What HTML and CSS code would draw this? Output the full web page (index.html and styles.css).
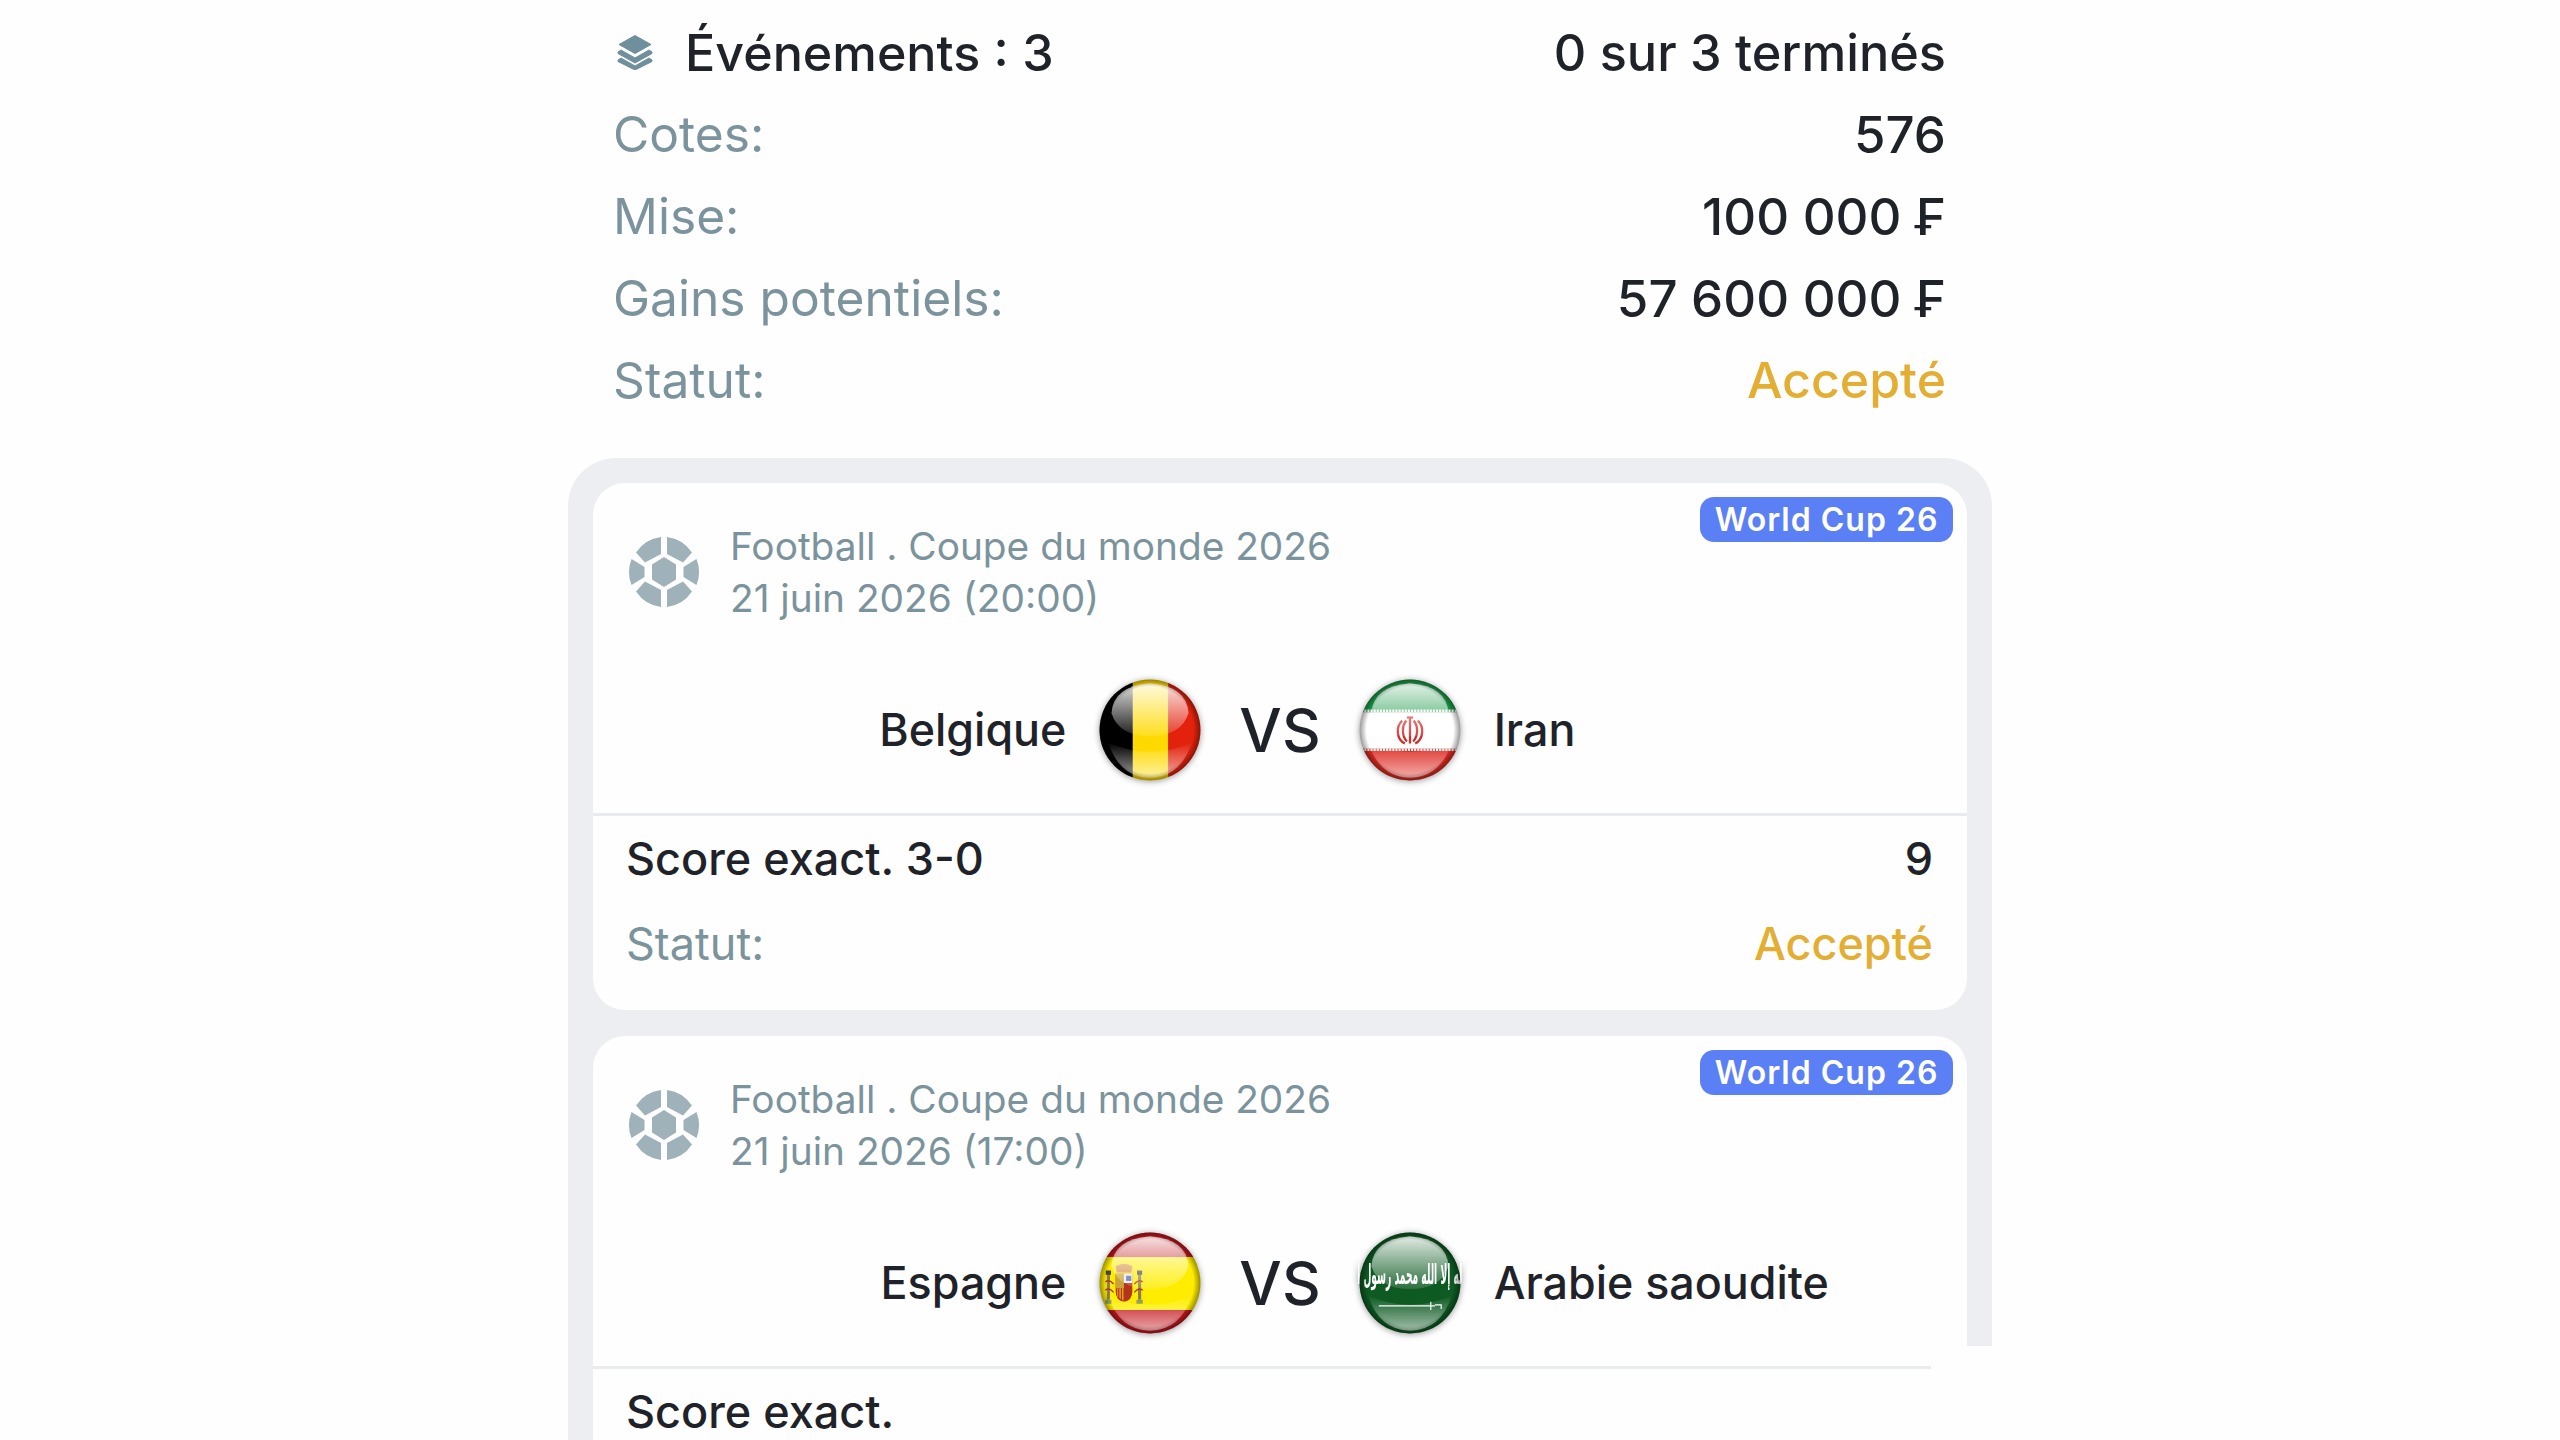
FILE: index.html
```html
<!DOCTYPE html>
<html lang="fr">
<head>
<meta charset="utf-8">
<title>Coupon</title>
<link rel="stylesheet" href="styles.css">
</head>
<body>
<svg class="defs" aria-hidden="true">
  <defs>
    <clipPath id="disc"><circle cx="50" cy="50" r="48.5"/></clipPath>
    <linearGradient id="glossTop" x1="0" y1="0" x2="0" y2="1">
      <stop offset="0" stop-color="#fff" stop-opacity=".88"/>
      <stop offset="1" stop-color="#fff" stop-opacity=".12"/>
    </linearGradient>
    <linearGradient id="glossBot" x1="0" y1="0" x2="0" y2="1">
      <stop offset="0" stop-color="#fff" stop-opacity="0"/>
      <stop offset="1" stop-color="#fff" stop-opacity=".62"/>
    </linearGradient>
    <radialGradient id="rim" cx=".5" cy=".5" r=".5">
      <stop offset=".86" stop-color="#000" stop-opacity="0"/>
      <stop offset="1" stop-color="#000" stop-opacity=".4"/>
    </radialGradient>
    <filter id="softer"><feGaussianBlur stdDeviation=".3"/></filter>
    <symbol id="gloss" viewBox="0 0 100 100">
      <path d="M13 34 Q14 8 50 5 Q86 8 87 34 Q80 56 50 56 Q20 56 13 34Z" fill="url(#glossTop)"/>
      <path d="M10 62 Q50 80 90 62 Q80 95 50 96 Q20 95 10 62Z" fill="url(#glossBot)"/>
      <circle cx="50" cy="50" r="48.5" fill="url(#rim)"/>
    </symbol>
    <symbol id="ball" viewBox="0 0 72 72">
      <path d="M36 21 48 28.5V43.5L36 51 24 43.5V28.5Z"/>
      <path d="M33 1V18L17 26.5 8 16.5A35.5 35.5 0 0 1 33 1Z"/>
      <path d="M39 1V18L55 26.5 64 16.5A35.5 35.5 0 0 0 39 1Z"/>
      <path d="M3.5 23 16.5 31V41L3.5 49A35.5 35.5 0 0 1 3.5 23Z"/>
      <path d="M68.5 23 55.5 31V41L68.5 49A35.5 35.5 0 0 0 68.5 23Z"/>
      <path d="M33 71V54L17 45.5 8 55.5A35.5 35.5 0 0 0 33 71Z"/>
      <path d="M39 71V54L55 45.5 64 55.5A35.5 35.5 0 0 1 39 71Z"/>
    </symbol>
  </defs>
</svg>

<main class="page">
  <section class="summary">
    <div class="row">
      <div class="events">
        <svg class="layers" viewBox="0 0 36 36">
          <path d="M18 1.5 34 10.5 18 19.5 2 10.5Z"/>
          <path d="M4 16 18 24 32 16 35 18V19.5L18 29 1 19.5V18Z"/>
          <path d="M4 24 18 32 32 24 35 26V27.5L18 36 1 27.5V26Z"/>
        </svg>
        <span class="value">Événements : 3</span>
      </div>
      <span class="value terminated">0 sur 3 terminés</span>
    </div>
    <div class="row"><span class="label">Cotes:</span><span class="value num">576</span></div>
    <div class="row"><span class="label">Mise:</span><span class="value num">100 000 ₣</span></div>
    <div class="row"><span class="label">Gains potentiels:</span><span class="value num">57 600 000 ₣</span></div>
    <div class="row"><span class="label">Statut:</span><span class="accepted">Accepté</span></div>
  </section>

  <section class="panel">
    <article class="card">
      <span class="badge">World Cup 26</span>
      <header class="meta">
        <svg class="ball"><use href="#ball"/></svg>
        <div class="meta-text">
          <div>Football . Coupe du monde 2026</div>
          <div>21 juin 2026 (20:00)</div>
        </div>
      </header>
      <div class="match">
        <div class="side side-left">
          <span class="team">Belgique</span>
          <svg class="flag" viewBox="0 0 100 100">
            <g clip-path="url(#disc)"><g filter="url(#softer)">
              <rect x="0" y="0" width="33.5" height="100" fill="#050505"/>
              <rect x="33.5" y="0" width="34" height="100" fill="#ffd900"/>
              <rect x="67.5" y="0" width="32.5" height="100" fill="#e2200c"/>
            </g></g>
            <use href="#gloss" width="100" height="100"/>
          </svg>
        </div>
        <span class="vs">VS</span>
        <div class="side">
          <svg class="flag" viewBox="0 0 100 100">
            <g clip-path="url(#disc)"><g filter="url(#softer)">
              <rect width="100" height="33" fill="#1f9a49"/>
              <rect y="33" width="100" height="35" fill="#fff"/>
              <rect y="68" width="100" height="32" fill="#de2b20"/>
              <path d="M0 31.5H100M0 69H100" stroke="#fff" stroke-width="2.4" stroke-dasharray="2 1"/>
              <g fill="none" stroke="#d42a2a" stroke-width="2.2">
                <path d="M50 38V63"/>
                <path d="M46.5 41C42 46 42 56 47 61"/>
                <path d="M53.5 41C58 46 58 56 53 61"/>
                <path d="M42.5 41C36 47 37 59 45 63"/>
                <path d="M57.5 41C64 47 63 59 55 63"/>
                <path d="M47 38H53"/>
              </g>
            </g></g>
            <use href="#gloss" width="100" height="100"/>
          </svg>
          <span class="team">Iran</span>
        </div>
      </div>
      <div class="bet">
        <div class="bet-row"><span class="bet-name">Score exact. 3-0</span><span class="bet-name">9</span></div>
        <div class="bet-row"><span class="bet-label">Statut:</span><span class="accepted-small">Accepté</span></div>
      </div>
    </article>

    <article class="card">
      <span class="badge">World Cup 26</span>
      <header class="meta">
        <svg class="ball"><use href="#ball"/></svg>
        <div class="meta-text">
          <div>Football . Coupe du monde 2026</div>
          <div>21 juin 2026 (17:00)</div>
        </div>
      </header>
      <div class="match">
        <div class="side side-left">
          <span class="team">Espagne</span>
          <svg class="flag" viewBox="0 0 100 100">
            <g clip-path="url(#disc)"><g filter="url(#softer)">
              <rect width="100" height="25" fill="#c4121f"/>
              <rect y="25" width="100" height="51" fill="#ffed00"/>
              <rect y="76" width="100" height="24" fill="#c4121f"/>
              <path d="M17 34 Q25 29 33 34 L32 40 H18Z" fill="#d28a3a"/>
              <path d="M17 41H33V58Q33 67 25 68 17 67 17 58Z" fill="#b5351c"/>
              <path d="M17 41H25V55H17Z" fill="#c8a33a"/>
              <path d="M25 41H33V50H25Z" fill="#e8eef0"/>
              <path d="M27 43H32V48H27Z" fill="#5a64a8"/>
              <path d="M18.5 55H24.5V67L18.5 63Z" fill="#d8a521"/>
              <path d="M20 55V65M22.5 55V66" stroke="#c22a1c" stroke-width="1"/>
              <path d="M10 41V66M40 41V66" stroke="#8a7d53" stroke-width="3"/>
              <path d="M7.5 38H12.5V42H7.5ZM37.5 38H42.5V42H37.5Z" fill="#444"/>
              <path d="M7 66H13V70H7ZM37 66H43V70H37Z" fill="#8aa365"/>
              <path d="M7 49Q11 46 15 51M35 51Q39 46 43 49M7 57Q11 54 15 59M35 59Q39 54 43 57" fill="none" stroke="#b5351c" stroke-width="1.4"/>
            </g></g>
            <use href="#gloss" width="100" height="100"/>
          </svg>
        </div>
        <span class="vs">VS</span>
        <div class="side">
          <svg class="flag" viewBox="0 0 100 100">
            <g clip-path="url(#disc)"><g filter="url(#softer)">
              <rect width="100" height="100" fill="#0c5a20"/>
              <path d="M20 72H74" stroke="#fff" stroke-width="1.4"/>
              <path d="M70 68V76M74 71H80V75" fill="none" stroke="#fff" stroke-width="1.1"/>
            </g></g>
            <text class="shahada" transform="translate(50 51) scale(.88 2.6)" text-anchor="middle">لا إله إلا الله محمد رسول الله</text>
            <use href="#gloss" width="100" height="100"/>
          </svg>
          <span class="team">Arabie saoudite</span>
        </div>
      </div>
      <div class="bet">
        <div class="bet-row"><span class="bet-name">Score exact.</span></div>
      </div>
    </article>
  </section>
  <div class="cover"></div>
</main>
</body>
</html>
```
FILE: styles.css
```css
html, body {
  margin: 0;
  height: 1440px;
  overflow: hidden;
  background: #fefefe;
}
body {
  font-family: Inter, "Noto Sans", sans-serif;
  color: #1f2329;
}
.defs {
  display: block;
  width: 0;
  height: 0;
}
.page {
  position: relative;
  display: flex;
  flex-direction: column;
  width: 1424px;
  height: 1440px;
  margin: 0 auto;
  overflow: hidden;
}
.summary {
  flex: none;
  padding: 11px 46px 37px 45px;
}
.row {
  display: flex;
  justify-content: space-between;
  align-items: center;
  height: 82px;
  font-size: 50px;
}
.value {
  font-size: 50.2px;
  font-weight: 450;
}
.terminated {
  font-size: 50.4px;
}
.num {
  font-size: 51px;
}
.events {
  display: flex;
  align-items: center;
  gap: 32px;
}
.layers {
  width: 36px;
  height: 36px;
  margin-left: 4px;
  fill: #6f8f9c;
  stroke: #6f8f9c;
  stroke-width: 1;
  stroke-linejoin: round;
}
.label {
  color: #7b939c;
  font-size: 49.7px;
}
.accepted {
  color: #e4ae33;
  font-weight: 450;
}
.panel {
  flex: 1;
  display: flex;
  flex-direction: column;
  gap: 26px;
  padding: 25px 25px 0;
  background: #eceef1;
  border-radius: 48px 48px 0 0;
  box-sizing: border-box;
}
.card {
  position: relative;
  flex: none;
  background: #fefefe;
  border-radius: 32px;
}
.badge {
  position: absolute;
  top: 14px;
  right: 14px;
  box-sizing: border-box;
  width: 253px;
  height: 45px;
  line-height: 45px;
  text-align: center;
  border-radius: 14px;
  background: #5b7ff5;
  color: #fff;
  font-size: 32px;
  font-weight: 600;
  letter-spacing: 1px;
}
.meta {
  display: flex;
  align-items: center;
  gap: 30px;
  padding: 37px 34px 0 35px;
}
.ball {
  flex: none;
  width: 72px;
  height: 72px;
  fill: #9fb1b9;
}
.meta-text {
  font-size: 38.8px;
  line-height: 52px;
  color: #7b939c;
}
.match {
  display: grid;
  grid-template-columns: 1fr auto 1fr;
  align-items: center;
  gap: 37px;
  height: 192px;
  box-sizing: border-box;
  padding: 23px 0 0;
  border-bottom: 3px solid #e9ebee;
}
.side {
  display: flex;
  align-items: center;
  gap: 32px;
}
.side-left {
  justify-content: flex-end;
}
.team {
  font-size: 44.8px;
  font-weight: 450;
}
.flag {
  flex: none;
  width: 104px;
  height: 104px;
  filter: drop-shadow(0 1px 3px rgba(0, 0, 0, .4));
}
.vs {
  font-size: 60px;
  font-weight: 500;
  line-height: 1;
}
.shahada {
  font-family: "DejaVu Sans", sans-serif;
  font-size: 10px;
  font-weight: 700;
  fill: #fff;
}
.bet {
  padding: 0 34px 24px 33px;
}
.bet-row {
  display: flex;
  justify-content: space-between;
  align-items: center;
  height: 85px;
  font-size: 45px;
}
.bet-name {
  font-weight: 450;
}
.bet-label {
  color: #7b939c;
}
.accepted-small {
  color: #e4ae33;
  font-weight: 450;
}
.cover {
  position: absolute;
  left: 1363px;
  right: 0;
  top: 1346px;
  bottom: 0;
  background: #fefefe;
}
```
